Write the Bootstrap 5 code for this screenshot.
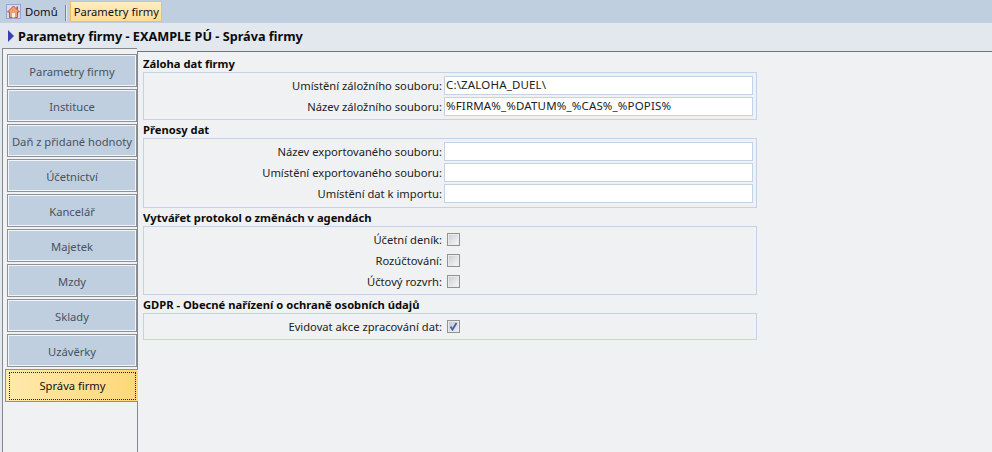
<!DOCTYPE html>
<html lang="cs"><head><meta charset="utf-8">
<link href="https://cdn.jsdelivr.net/npm/bootstrap@5.3.0/dist/css/bootstrap.min.css" rel="stylesheet">
<style>
html,body{height:100%;margin:0}
body{font-family:"Noto Sans","Open Sans",sans-serif;font-size:11.2px;line-height:14px;color:#1a1a1a;background:#e3e8ef;overflow:hidden;width:992px;height:452px}
.topbar{height:23px;background:#bfcfe0;padding:1px 0 0 6px}
.crumb{height:21px;display:flex;align-items:center;white-space:nowrap;color:#111}
.crumb-home{gap:4px;font-size:11.3px}
.crumb-sep{width:1px;height:16px;background:#7d838b;box-shadow:1px 0 0 #e6ebf1;margin:0 4px 0 7px}
.crumb-on{background:linear-gradient(#ffedc2,#ffdc95);border:1px solid #f5bb6a;padding:0 3px;width:92px;font-size:11.2px}
.titlebar{height:25px;font-weight:700;font-size:12.7px;color:#0b0b0b;gap:4px;padding-left:8px}
.mainarea{height:404px}
.tabcol{width:135px;flex:none;margin-left:2px;border-left:1px solid #85888d;border-top:1px solid #85888d;background:#f0f1f3;padding:5px 0 0 4px;gap:2px}
.tabitem{height:33px;padding-top:2px;background:#bfcfe0;border:1px solid #8d9096;box-shadow:inset 0 0 0 1px #f2f5f8;color:#49525f;display:flex;align-items:center;justify-content:center;white-space:nowrap}
.tabitem-on{margin-left:-2px;margin-right:-1px;position:relative;z-index:1;background:linear-gradient(90deg,#ffe9ad,#ffd778);color:#111;border-right:0;box-shadow:none}
.tabitem-on span{position:absolute;inset:2px 2px 1px 3px;border:1px dotted #222;display:flex;align-items:center;justify-content:center}
.formcol{flex:1;margin-top:3px;background:#f0f1f3;border-left:1px solid #85888d;border-top:1px solid #707478;padding:4px 0 0 5px}
.grouphead{font-weight:700;font-size:11.2px;color:#0b0b0b;height:15px;line-height:15px;margin-bottom:1px;white-space:nowrap}
.groupbox{width:614px;border:1px solid #c3d3e3;padding:3px 3px 3px 0;margin-bottom:2px;gap:2px}
.groupbox-wide{padding-bottom:4px}
.groupbox-tight{padding:2px 3px 2px 0;gap:0}
.fieldrow{height:19px;display:flex;align-items:center;gap:2px}
.fieldrow label{width:298px;text-align:right;white-space:nowrap;color:#222}
.fieldbox{width:309px;height:19px;background:#fff;border:1px solid #c3d3e3;padding:0 1px;font-size:11.5px;letter-spacing:.16px;line-height:16px;white-space:nowrap;color:#222}
.checkline{height:21px}
.tick{width:13px;height:13px;flex:none;border:1px solid #929292;background:linear-gradient(135deg,#c9ccd0,#f8f9fa);margin-left:3px;box-shadow:inset 0 0 0 1px #e9ebee}
.tick-on{background:linear-gradient(135deg,#bcc5d2,#eef1f5)}
.tick svg{display:block}
</style></head><body>
<div class="topbar d-flex align-items-start">
  <div class="crumb crumb-home">
    <svg width="15" height="15" viewBox="0 0 15 15"><rect x="0.5" y="0.5" width="14" height="14" fill="#d5dcea" stroke="#6a6fc0" stroke-dasharray="1 1"/><path d="M7.5 2 1.5 8H3.5V13.5H11.5V8H13.5Z" fill="#f0a070" stroke="#c24a2c" stroke-width=".9"/><rect x="6" y="9" width="3" height="4.5" fill="#fff1dc"/><path d="M10.5 2.5h1.5v3.5L10.5 4.6Z" fill="#c24a2c"/></svg>
    <span>Domů</span>
  </div>
  <div class="crumb-sep mt-1"></div>
  <div class="crumb crumb-on">Parametry firmy</div>
</div>
<div class="titlebar d-flex align-items-center">
  <svg width="6" height="12" viewBox="0 0 6 12"><path d="M0 0 6 6 0 12Z" fill="#3c3fae"/></svg>
  <span>Parametry firmy - EXAMPLE PÚ - Správa firmy</span>
</div>
<div class="mainarea d-flex">
  <div class="tabcol d-flex flex-column">
    <div class="tabitem">Parametry firmy</div>
    <div class="tabitem">Instituce</div>
    <div class="tabitem">Daň z přidané hodnoty</div>
    <div class="tabitem">Účetnictví</div>
    <div class="tabitem">Kancelář</div>
    <div class="tabitem">Majetek</div>
    <div class="tabitem">Mzdy</div>
    <div class="tabitem">Sklady</div>
    <div class="tabitem">Uzávěrky</div>
    <div class="tabitem tabitem-on"><span>Správa firmy</span></div>
  </div>
  <div class="formcol">
    <div class="grouphead">Záloha dat firmy</div>
    <div class="groupbox d-flex flex-column">
      <div class="fieldrow"><label>Umístění záložního souboru:</label><div class="fieldbox">C:\ZALOHA_DUEL\</div></div>
      <div class="fieldrow"><label>Název záložního souboru:</label><div class="fieldbox">%FIRMA%_%DATUM%_%CAS%_%POPIS%</div></div>
    </div>
    <div class="grouphead">Přenosy dat</div>
    <div class="groupbox groupbox-wide d-flex flex-column">
      <div class="fieldrow"><label>Název exportovaného souboru:</label><div class="fieldbox"></div></div>
      <div class="fieldrow"><label>Umístění exportovaného souboru:</label><div class="fieldbox"></div></div>
      <div class="fieldrow"><label>Umístění dat k importu:</label><div class="fieldbox"></div></div>
    </div>
    <div class="grouphead">Vytvářet protokol o změnách v agendách</div>
    <div class="groupbox groupbox-tight d-flex flex-column">
      <div class="fieldrow checkline"><label>Účetní deník:</label><div class="tick"></div></div>
      <div class="fieldrow checkline"><label>Rozúčtování:</label><div class="tick"></div></div>
      <div class="fieldrow checkline"><label>Účtový rozvrh:</label><div class="tick"></div></div>
    </div>
    <div class="grouphead">GDPR - Obecné nařízení o ochraně osobních údajů</div>
    <div class="groupbox groupbox-tight d-flex flex-column">
      <div class="fieldrow checkline"><label>Evidovat akce zpracování dat:</label><div class="tick tick-on"><svg width="11" height="11" viewBox="0 0 11 11"><path d="M2.5 5.5 4.5 8.5 8.5 2" fill="none" stroke="#46629c" stroke-width="1.8"/></svg></div></div>
    </div>
  </div>
</div>
</body></html>
